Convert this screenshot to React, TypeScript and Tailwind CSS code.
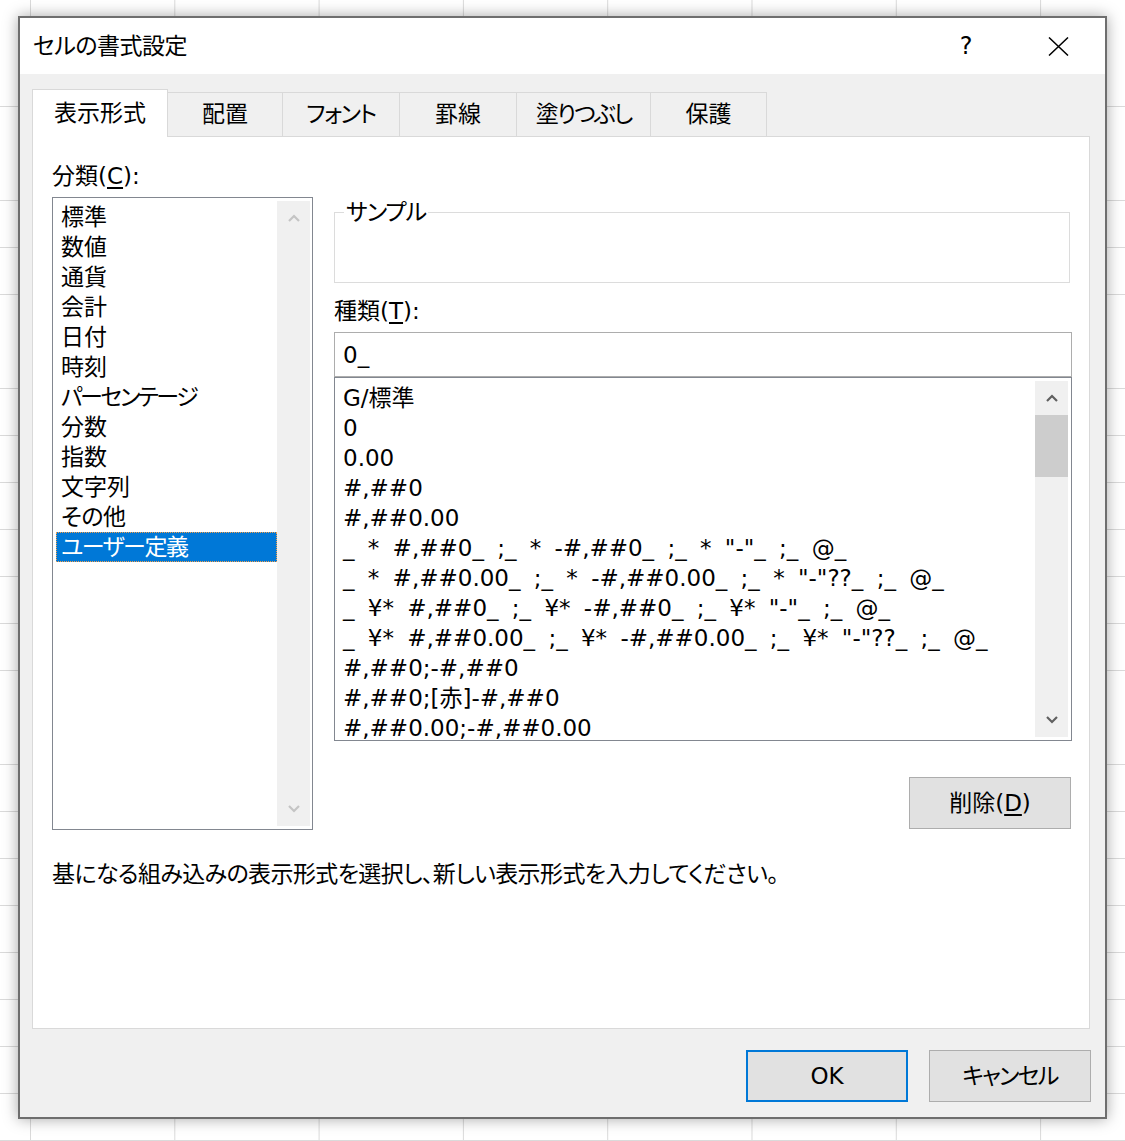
import React from "react";

const F =
  "font-['DejaVu_Sans','Noto_Sans_CJK_JP',sans-serif] [font-feature-settings:'palt'] text-black";

function Chevron({ dir, color }: { dir: "up" | "down"; color: string }) {
  return (
    <svg width="12" height="8" viewBox="0 0 12 8" fill="none">
      <path
        d={dir === "up" ? "M1 7 L6 2 L11 7" : "M1 1 L6 6 L11 1"}
        stroke={color}
        strokeWidth="2.2"
      />
    </svg>
  );
}

const categories = [
  { label: "標準", cls: "" },
  { label: "数値", cls: "" },
  { label: "通貨", cls: "" },
  { label: "会計", cls: "" },
  { label: "日付", cls: "" },
  { label: "時刻", cls: "" },
  { label: "パーセンテージ", cls: "tracking-[-2.4px]" },
  { label: "分数", cls: "" },
  { label: "指数", cls: "" },
  { label: "文字列", cls: "" },
  { label: "その他", cls: "tracking-[-0.5px]" },
  { label: "ユーザー定義", cls: "tracking-[-1.5px]" },
];

const formats = [
  "G/標準",
  "0",
  "0.00",
  "#,##0",
  "#,##0.00",
  '_ * #,##0_ ;_ * -#,##0_ ;_ * "-"_ ;_ @_',
  '_ * #,##0.00_ ;_ * -#,##0.00_ ;_ * "-"??_ ;_ @_',
  '_ ¥* #,##0_ ;_ ¥* -#,##0_ ;_ ¥* "-"_ ;_ @_',
  '_ ¥* #,##0.00_ ;_ ¥* -#,##0.00_ ;_ ¥* "-"??_ ;_ @_',
  "#,##0;-#,##0",
  "#,##0;[赤]-#,##0",
  "#,##0.00;-#,##0.00",
];

const tabs = [
  { label: "配置", cls: "w-[115px]" },
  { label: "フォント", cls: "w-[117px] tracking-[-1.5px]" },
  { label: "罫線", cls: "w-[117px]" },
  { label: "塗りつぶし", cls: "w-[134px] tracking-[-2px]" },
  { label: "保護", cls: "w-[116px]" },
];

export default function App() {
  return (
    <div
      className={`${F} w-[1125px] h-[1141px] overflow-hidden bg-white bg-[linear-gradient(to_right,#dadada_1px,transparent_1px),linear-gradient(to_bottom,#dadada_1px,transparent_1px)] bg-[size:144.3px_47px] bg-[position:30px_12px] pt-[16px] pl-[18px]`}
    >
      <div className="w-[1089px] h-[1103px] border-2 border-[#6e6e6e] bg-[#f0f0f0] shadow-[0_0_14px_rgba(0,0,0,0.35)] flex flex-col">
        {/* Title bar */}
        <div className="h-[56px] bg-white flex items-center pl-[13px] pr-[24px] text-[23px] leading-[30px]">
          <span className="tracking-[-0.5px]">セルの書式設定</span>
          <div className="ml-auto flex items-center gap-[46px]">
            <span className="w-[46px] text-center text-[24px]">?</span>
            <span className="w-[46px] flex justify-center">
              <svg width="21" height="19" viewBox="0 0 21 19" fill="none">
                <path d="M1 0.5 L20 18.5 M20 0.5 L1 18.5" stroke="#000" strokeWidth="1.5" />
              </svg>
            </span>
          </div>
        </div>

        {/* Body */}
        <div className="flex-1 flex flex-col pl-[12px] pr-[15px] pt-[15px] pb-[15px]">
          {/* Tabs */}
          <div className="flex items-end h-[47px] text-[23px]">
            <div className="relative z-10 -mb-px w-[136px] h-[48px] bg-white border border-b-0 border-[#d9d9d9] flex items-center justify-center">
              表示形式
            </div>
            {tabs.map((t) => (
              <div
                key={t.label}
                className={`${t.cls} h-[44px] bg-[#f0f0f0] border-t border-r border-[#d9d9d9] flex items-center justify-center`}
              >
                {t.label}
              </div>
            ))}
          </div>

          {/* Panel */}
          <div className="flex-1 bg-white border border-[#d9d9d9] pl-[19px] pr-[17px] pt-[24px] flex flex-col text-[23px] leading-[30px]">
            <div className="h-[30px]">
              分類(<span className="underline underline-offset-[3px] decoration-[1.5px]">C</span>):
            </div>
            <div className="mt-[6px] flex gap-[21px]">
              {/* Category list */}
              <div className="w-[261px] h-[633px] border border-[#828790] flex">
                <div className="flex-1 pl-[3px] pt-[4px] flex flex-col">
                  {categories.map((c) => {
                    const sel = c.label === "ユーザー定義";
                    return (
                      <div
                        key={c.label}
                        className={
                          sel
                            ? "h-[30px] pl-[4px] border border-dotted border-[#f5a04a] bg-[#0078d7] text-white flex items-center"
                            : "h-[30px] pl-[4px] border border-transparent flex items-center"
                        }
                      >
                        <span className={c.cls}>{c.label}</span>
                      </div>
                    );
                  })}
                </div>
                <div className="w-[33px] my-[3px] mr-[2px] bg-[#f0f0f0] flex flex-col justify-between">
                  <div className="h-[34px] flex items-center justify-center">
                    <Chevron dir="up" color="#c4c4c4" />
                  </div>
                  <div className="h-[34px] flex items-center justify-center">
                    <Chevron dir="down" color="#c4c4c4" />
                  </div>
                </div>
              </div>

              {/* Right column */}
              <div className="flex-1 flex flex-col">
                <fieldset className="border border-[#dcdcdc] mr-[2px]">
                  <legend className="ml-[9px] px-[2px] leading-[30px] tracking-[-1px]">サンプル</legend>
                  <div className="h-[55px]" />
                </fieldset>
                <div className="mt-[13px] h-[30px]">
                  種類(<span className="underline underline-offset-[3px] decoration-[1.5px]">T</span>):
                </div>
                <div className="mt-[6px] h-[45px] border border-[#adadad] flex items-center pl-[8px]">
                  0_
                </div>
                <div className="h-[364px] border border-[#828790] flex">
                  <div className="flex-1 pl-[8px] pt-[5px] flex flex-col overflow-hidden whitespace-pre [word-spacing:6px]">
                    {formats.map((f, i) => (
                      <div key={i} className="h-[30px] flex items-center">
                        {f}
                      </div>
                    ))}
                  </div>
                  <div className="w-[33px] my-[3px] mr-[3px] bg-[#f0f0f0] flex flex-col">
                    <div className="h-[34px] flex items-center justify-center">
                      <Chevron dir="up" color="#606060" />
                    </div>
                    <div className="h-[62px] bg-[#cdcdcd]" />
                    <div className="flex-1" />
                    <div className="h-[34px] flex items-center justify-center">
                      <Chevron dir="down" color="#606060" />
                    </div>
                  </div>
                </div>
                <div className="mt-[36px] flex justify-end mr-[1px]">
                  <div className="w-[162px] h-[52px] bg-[#e1e1e1] border border-[#adadad] flex items-center justify-center">
                    削除(<span className="underline underline-offset-[3px] decoration-[1.5px]">D</span>)
                  </div>
                </div>
              </div>
            </div>
            <div className="mt-[29px] h-[30px] tracking-[-0.6px]">
              基になる組み込みの表示形式を選択し、新しい表示形式を入力してください。
            </div>
          </div>

          {/* Buttons */}
          <div className="mt-[21px] -mr-px flex justify-end gap-[21px] text-[23px]">
            <div className="w-[162px] h-[52px] bg-[#e1e1e1] border-2 border-[#0078d7] flex items-center justify-center">
              OK
            </div>
            <div className="w-[162px] h-[52px] bg-[#e1e1e1] border border-[#adadad] flex items-center justify-center">
              <span className="tracking-[-1.8px]">キャンセル</span>
            </div>
          </div>
        </div>
      </div>
    </div>
  );
}
